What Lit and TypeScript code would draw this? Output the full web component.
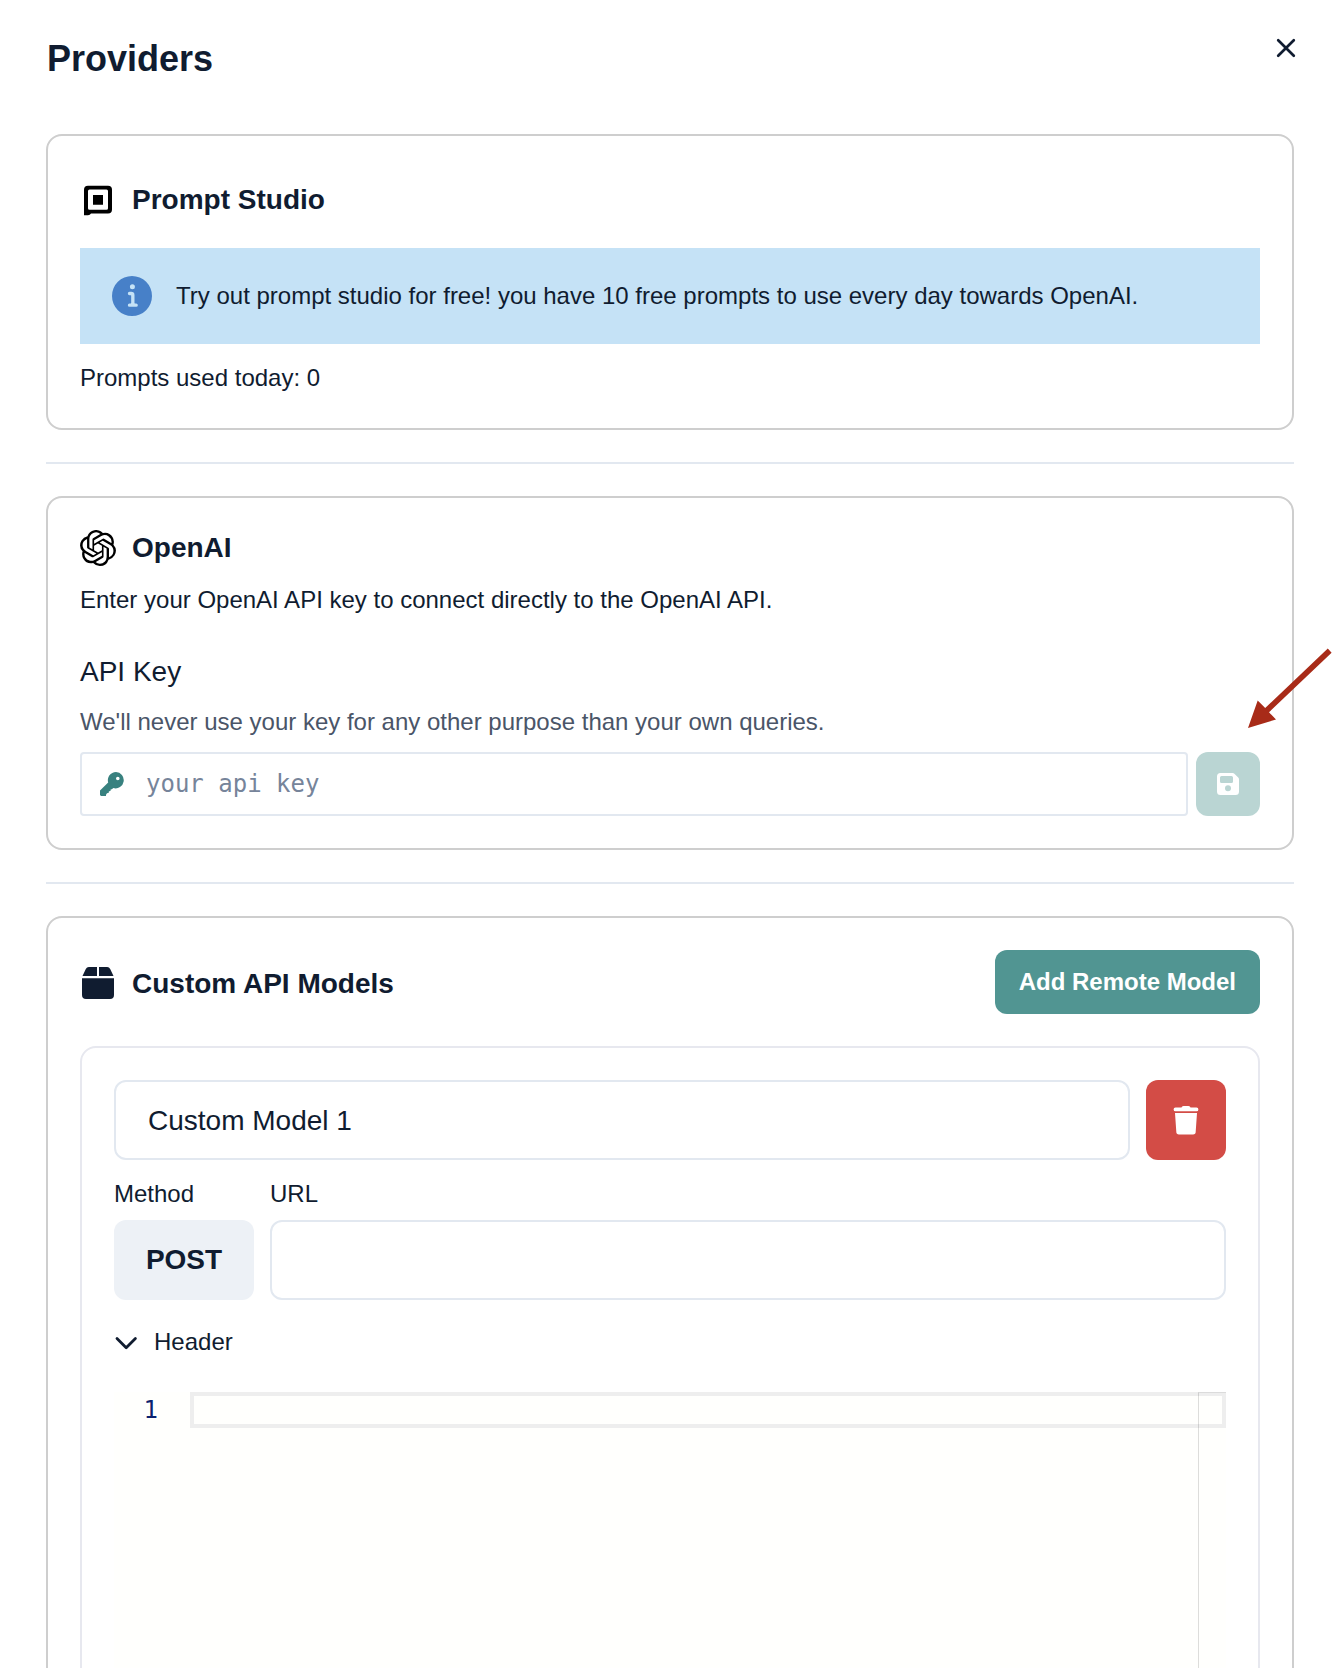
import { LitElement, html, css } from "lit";
import { customElement } from "lit/decorators.js";

const promptStudioIcon = html`<svg class="logo" viewBox="0 0 36 36">
  <path fill-rule="evenodd" fill="#000" d="M8 3.7H28a4 4 0 0 1 4 4V27.6a4 4 0 0 1-4 4H11Q10 33.2 8 33.2H4V7.7a4 4 0 0 1 4-4ZM9.5 7.6A1.5 1.5 0 0 0 8 9.1V26.2a1.5 1.5 0 0 0 1.5 1.5H26.5A1.5 1.5 0 0 0 28 26.2V9.1A1.5 1.5 0 0 0 26.5 7.6ZM13 13H23V22.8H13Z"/>
</svg>`;

const openAiIcon = html`<svg class="logo" viewBox="0 0 24 24">
  <path fill="#000" d="M22.2819 9.8211a5.9847 5.9847 0 0 0-.5157-4.9108 6.0462 6.0462 0 0 0-6.5098-2.9A6.0651 6.0651 0 0 0 4.9807 4.1818a5.9847 5.9847 0 0 0-3.9977 2.9 6.0462 6.0462 0 0 0 .7427 7.0966 5.98 5.98 0 0 0 .511 4.9107 6.051 6.051 0 0 0 6.5146 2.9001A5.9847 5.9847 0 0 0 13.2599 24a6.0557 6.0557 0 0 0 5.7718-4.2058 5.9894 5.9894 0 0 0 3.9977-2.9001 6.0557 6.0557 0 0 0-.7475-7.0729zm-9.022 12.6081a4.4755 4.4755 0 0 1-2.8764-1.0408l.1419-.0804 4.7783-2.7582a.7948.7948 0 0 0 .3927-.6813v-6.7369l2.02 1.1686a.071.071 0 0 1 .038.052v5.5826a4.504 4.504 0 0 1-4.4945 4.4944zm-9.6607-4.1254a4.4708 4.4708 0 0 1-.5346-3.0137l.142.0852 4.783 2.7582a.7712.7712 0 0 0 .7806 0l5.8428-3.3685v2.3324a.0804.0804 0 0 1-.0332.0615L9.74 19.9502a4.4992 4.4992 0 0 1-6.1408-1.6464zM2.3408 7.8956a4.485 4.485 0 0 1 2.3655-1.9728V11.6a.7664.7664 0 0 0 .3879.6765l5.8144 3.3543-2.0201 1.1685a.0757.0757 0 0 1-.071 0l-4.8303-2.7865A4.504 4.504 0 0 1 2.3408 7.872zm16.5963 3.8558L13.1038 8.364 15.1192 7.2a.0757.0757 0 0 1 .071 0l4.8303 2.7913a4.4944 4.4944 0 0 1-.6765 8.1042v-5.6772a.79.79 0 0 0-.407-.667zm2.0107-3.0231l-.142-.0852-4.7735-2.7818a.7759.7759 0 0 0-.7854 0L9.409 9.2297V6.8974a.0662.0662 0 0 1 .0284-.0615l4.8303-2.7866a4.4992 4.4992 0 0 1 6.6802 4.66zM8.3065 12.863l-2.02-1.1638a.0804.0804 0 0 1-.038-.0567V6.0742a4.4992 4.4992 0 0 1 7.3757-3.4537l-.142.0805L8.704 5.459a.7948.7948 0 0 0-.3927.6813zm1.0976-2.3654l2.602-1.4998 2.6069 1.4998v2.9994l-2.5974 1.4997-2.6067-1.4997Z"/>
</svg>`;

const boxIcon = html`<svg class="logo" viewBox="0 0 36 36">
  <path fill="currentColor" d="M9 3H17V12H2.5L5.8 5A3.4 3.4 0 0 1 9 3ZM19 3H27A3.4 3.4 0 0 1 30.2 5L33.5 12H19ZM2 14.2H34V31A4 4 0 0 1 30 35H6A4 4 0 0 1 2 31Z"/>
</svg>`;

const infoIcon = html`<svg class="info" viewBox="0 0 24 24">
  <path fill="currentColor" d="M12,0A12,12,0,1,0,24,12,12.013,12.013,0,0,0,12,0Zm.25,5a1.5,1.5,0,1,1-1.5,1.5A1.5,1.5,0,0,1,12.25,5ZM14.5,18.5h-4a1,1,0,0,1,0-2h.75a.25.25,0,0,0,.25-.25v-4.5a.25.25,0,0,0-.25-.25H10.5a1,1,0,0,1,0-2h1a2,2,0,0,1,2,2v4.75a.25.25,0,0,0,.25.25h.75a1,1,0,1,1,0,2Z"/>
</svg>`;

const keyIcon = html`<svg class="key" viewBox="0 0 24 24">
  <path fill-rule="evenodd" fill="#38817f" d="M16 0A8.200 8.200 0 1 1 13.4 16.1L11.8 17.2L10.6 17.500V18.800L8.800 19.400V20.800L7 21.300L6 22.800V24H1L0 23V18.6L8.2 10.6A8.200 8.200 0 0 1 16 0ZM17.8 4.7A1.8 1.8 0 1 0 17.8 8.3A1.8 1.8 0 1 0 17.8 4.7Z"/>
</svg>`;

const saveIcon = html`<svg class="save-icon" viewBox="0 0 22 22">
  <path fill-rule="evenodd" fill="currentColor" d="M3.5 0H15.600Q16.600 0 17.400 .8L21.200 4.600Q22 5.400 22 6.400V18.5A3.5 3.5 0 0 1 18.5 22H3.5A3.5 3.5 0 0 1 0 18.5V3.5A3.5 3.5 0 0 1 3.5 0ZM4.5 3A1.5 1.5 0 0 0 3 4.5V8.5A1.5 1.5 0 0 0 4.5 10H14.500A1.5 1.5 0 0 0 16 8.5V4.5A1.5 1.5 0 0 0 14.5 3ZM11 12.3A3 3 0 1 0 11 18.3A3 3 0 1 0 11 12.3Z"/>
</svg>`;

const trashIcon = html`<svg class="trash-icon" viewBox="0 0 26 29">
  <path fill="currentColor" d="M8.500 1.500Q8.700 0 10.500 0H15.500Q17.300 0 17.500 1.500H23.500A1.800 1.800 0 0 1 23.500 5.300H2.500A1.800 1.800 0 0 1 2.500 1.500ZM2 7H24L22.700 25.800A2.700 2.700 0 0 1 20 28.500H6A2.700 2.700 0 0 1 3.300 25.800Z"/>
</svg>`;

@customElement("app-root")
export class AppRoot extends LitElement {
  static styles = css`
    :host {
      display: block;
      height: 1668px;
      overflow: hidden;
      position: relative;
      background: #fff;
      color: #101c30;
      font: 24px/36px "Liberation Sans", Helvetica, Arial, sans-serif;
    }
    * { box-sizing: border-box; }
    svg { display: block; flex: none; }
    h1, h2, h3, p { margin: 0; }
    button { font: inherit; border: 0; padding: 0; cursor: pointer; }
    input { font: inherit; color: inherit; background: none; outline: none; }
    .panel { padding: 34px 48px 0 46px; }
    .top {
      display: flex;
      justify-content: space-between;
      height: 100px;
    }
    h1 { font-size: 36px; line-height: 48px; padding: 1px 0 0 1px; }
    .close {
      background: none;
      color: inherit;
      width: 20px;
      height: 28px;
      margin-right: -2px;
    }
    .card {
      border: 2px solid #cecece;
      border-radius: 16px;
      padding: 32px;
    }
    .studio { height: 296px; }
    .openai { height: 354px; }
    .custom { height: 900px; }
    .rule { height: 2px; background: #e2e8f0; margin: 32px 0; }
    .title { display: flex; align-items: center; gap: 16px; }
    h2 { font-size: 28px; line-height: 36px; }
    .logo { width: 36px; height: 36px; }
    .studio .title { padding: 14px 0 30px; }
    .alert {
      display: flex;
      align-items: center;
      gap: 24px;
      height: 96px;
      padding: 0 32px;
      background: #c5e2f6;
    }
    .info { width: 40px; height: 40px; color: #4780c8; }
    .used { margin-top: 16px; }
    .intro { margin-top: 16px; }
    h3 { font-size: 28px; line-height: 42px; font-weight: 400; margin-top: 33px; }
    .help { color: #4a5568; margin-top: 11px; }
    .key-row { display: flex; gap: 8px; margin-top: 12px; }
    .key-field {
      flex: 1;
      display: flex;
      align-items: center;
      height: 64px;
      padding-left: 18px;
      gap: 22px;
      border: 2px solid #e2e8f0;
      border-radius: 4px;
    }
    .key { width: 24px; height: 24px; }
    .key-field input {
      flex: 1;
      border: 0;
      padding: 0;
      font-family: "DejaVu Sans Mono", monospace;
    }
    .key-field input::placeholder { color: #76849a; opacity: 1; }
    .save {
      display: grid;
      place-items: center;
      width: 64px;
      height: 64px;
      border-radius: 12px;
      background: #bad5d3;
      color: #fff;
    }
    .save-icon { width: 22px; height: 22px; }
    .custom-head { display: flex; justify-content: space-between; align-items: center; }
    .custom-head h2 { padding-top: 3px; line-height: 33px; }
    .add {
      height: 64px;
      padding: 0 24px;
      border-radius: 12px;
      background: #519592;
      color: #fff;
      font-weight: 700;
    }
    .model {
      height: 800px;
      margin-top: 32px;
      padding: 32px;
      border: 2px solid #e7e8ef;
      border-radius: 16px;
    }
    .name-row { display: flex; gap: 16px; }
    .field {
      flex: 1;
      min-width: 0;
      height: 80px;
      padding: 2px 32px 0;
      font-size: 28px;
      border: 2px solid #e2e8f0;
      border-radius: 12px;
    }
    .remove {
      display: grid;
      place-items: center;
      width: 80px;
      height: 80px;
      border-radius: 12px;
      background: #d34c46;
      color: #fff;
    }
    .trash-icon { width: 26px; height: 29px; }
    .request {
      display: grid;
      grid-template-columns: 140px 1fr;
      column-gap: 16px;
      row-gap: 8px;
      margin-top: 16px;
    }
    .method {
      height: 80px;
      border-radius: 12px;
      background: #edf1f6;
      color: inherit;
      font-size: 28px;
      font-weight: 700;
    }
    .header-toggle { display: flex; align-items: center; gap: 16px; margin-top: 24px; }
    .editor {
      display: grid;
      grid-template-columns: 76px 1fr;
      height: 400px;
      margin-top: 32px;
      background: #fffffd;
    }
    .line-no {
      font: 24px/36px "DejaVu Sans Mono", monospace;
      color: #0b216f;
      text-align: right;
      padding-right: 32px;
    }
    .code { position: relative; }
    .active-line { height: 36px; border: 4px solid #eee; }
    .ruler {
      position: absolute;
      top: 0;
      right: 0;
      bottom: 0;
      width: 28px;
      border-left: 1px solid rgba(0, 0, 0, 0.13);
      border-top: 1px solid rgba(0, 0, 0, 0.08);
    }
    .arrow { position: absolute; left: 1240px; top: 640px; }
  `;

  render() {
    return html`
      <main class="panel">
        <header class="top">
          <h1>Providers</h1>
          <button class="close" aria-label="Close">
            <svg width="20" height="28" viewBox="0 0 20 28">
              <path d="M2.2 6.2L17.8 21.8M17.8 6.2L2.2 21.8" stroke="currentColor" stroke-width="2.7" stroke-linecap="round"/>
            </svg>
          </button>
        </header>
        <section class="card studio">
          <div class="title">${promptStudioIcon}<h2>Prompt Studio</h2></div>
          <div class="alert">
            ${infoIcon}
            <span>Try out prompt studio for free! you have 10 free prompts to use every day towards OpenAI.</span>
          </div>
          <p class="used">Prompts used today: 0</p>
        </section>
        <div class="rule"></div>
        <section class="card openai">
          <div class="title">${openAiIcon}<h2>OpenAI</h2></div>
          <p class="intro">Enter your OpenAI API key to connect directly to the OpenAI API.</p>
          <h3>API Key</h3>
          <p class="help">We'll never use your key for any other purpose than your own queries.</p>
          <div class="key-row">
            <label class="key-field">${keyIcon}<input placeholder="your api key" /></label>
            <button class="save" aria-label="Save">${saveIcon}</button>
          </div>
        </section>
        <div class="rule"></div>
        <section class="card custom">
          <div class="custom-head">
            <div class="title">${boxIcon}<h2>Custom API Models</h2></div>
            <button class="add">Add Remote Model</button>
          </div>
          <div class="model">
            <div class="name-row">
              <input class="field" value="Custom Model 1" />
              <button class="remove" aria-label="Delete">${trashIcon}</button>
            </div>
            <div class="request">
              <span>Method</span>
              <span>URL</span>
              <button class="method">POST</button>
              <input class="field" />
            </div>
            <div class="header-toggle">
              <svg width="24" height="24" viewBox="0 0 24 24">
                <path d="M3 8.6L12.2 17.8L21.4 8.6" fill="none" stroke="currentColor" stroke-width="2.8" stroke-linecap="round" stroke-linejoin="round"/>
              </svg>
              <span>Header</span>
            </div>
            <div class="editor">
              <div class="line-no">1</div>
              <div class="code">
                <div class="active-line"></div>
                <div class="ruler"></div>
              </div>
            </div>
          </div>
        </section>
      </main>
      <svg class="arrow" width="100" height="100" viewBox="1240 640 100 100">
        <path fill="#a82b18" d="M1248 728L1257.7 700.5L1265.2 708L1327.8 648.6L1331.6 652.8L1269 712.3L1276 719.5Z"/>
      </svg>
    `;
  }
}
